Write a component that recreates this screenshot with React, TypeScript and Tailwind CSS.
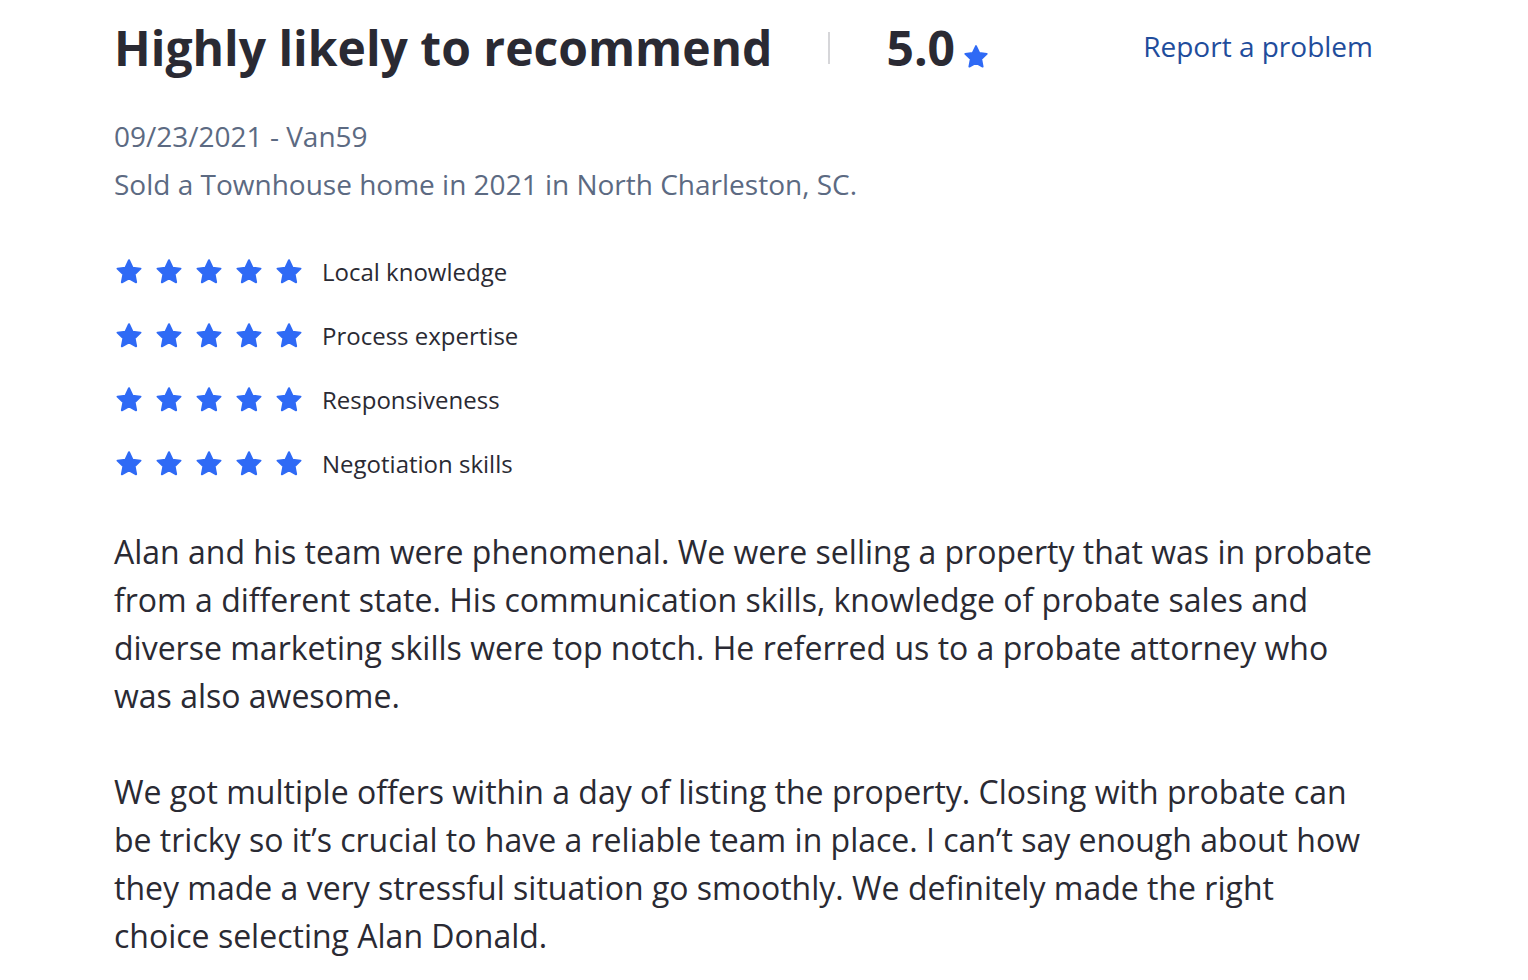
import React from 'react';

const StarIcon: React.FC<{ className?: string }> = ({ className }) => (
  <svg viewBox="0 0 24 24" className={className} aria-hidden="true">
    <path
      d="M12 2.6l2.8 5.9 6.4.8-4.7 4.5 1.2 6.4L12 17.1l-5.7 3.1 1.2-6.4-4.7-4.5 6.4-.8z"
      fill="currentColor"
      stroke="currentColor"
      strokeWidth="1.6"
      strokeLinejoin="round"
    />
  </svg>
);

const ratings = ['Local knowledge', 'Process expertise', 'Responsiveness', 'Negotiation skills'];

const firstParagraph = [
  'Alan and his team were phenomenal. We were selling a property that was in probate',
  'from a different state. His communication skills, knowledge of probate sales and',
  'diverse marketing skills were top notch. He referred us to a probate attorney who',
  'was also awesome.',
];

const secondParagraph = [
  'We got multiple offers within a day of listing the property. Closing with probate can',
  'be tricky so it’s crucial to have a reliable team in place. I can’t say enough about how',
  'they made a very stressful situation go smoothly. We definitely made the right',
  'choice selecting Alan Donald.',
];

const App: React.FC = () => {
  return (
    <div className="min-h-screen bg-white font-['Open_Sans',sans-serif] text-[#2a2a33]">
      <div className="ml-[114px] w-[1260px] pt-4">
        <div className="flex items-center justify-between">
          <div className="flex items-center">
            <h1 className="text-[48px] leading-[64px] font-bold">Highly likely to recommend</h1>
            <div className="mx-[56px] h-[32px] w-[2px] bg-[#d6d6d9]" />
            <div className="flex items-end">
              <span className="text-[48px] leading-[64px] font-bold">5.0</span>
              <StarIcon className="ml-[7px] mb-[9px] h-[28px] w-[28px] text-[#2f6af5]" />
            </div>
          </div>
          <a href="#" className="mb-[5px] mr-[1px] text-[28px] leading-[48px] text-[#1f4d9c]">
            Report a problem
          </a>
        </div>

        <div className="mt-[32px] text-[28px] leading-[48px] text-[#5c6a82]">
          <div>09/23/2021 - Van59</div>
          <div>Sold a Townhouse home in 2021 in North Charleston, SC.</div>
        </div>

        <div className="mt-[32px]">
          {ratings.map(label => (
            <div key={label} className="flex h-16 items-center">
              <div className="flex gap-[10px]">
                {[0, 1, 2, 3, 4].map(i => (
                  <StarIcon key={i} className="h-[30px] w-[30px] text-[#2f6af5]" />
                ))}
              </div>
              <span className="ml-[18px] text-[24px]">{label}</span>
            </div>
          ))}
        </div>

        <div className="mt-[32px] whitespace-nowrap text-[32px] leading-[48px]">
          <p>
            {firstParagraph.map(line => (
              <span key={line} className="block">
                {line}
              </span>
            ))}
          </p>
          <p className="mt-[48px]">
            {secondParagraph.map(line => (
              <span key={line} className="block">
                {line}
              </span>
            ))}
          </p>
        </div>
      </div>
    </div>
  );
};

export default App;
